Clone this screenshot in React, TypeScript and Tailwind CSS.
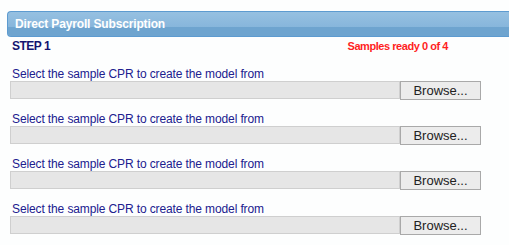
import React from "react";

function Row() {
  return (
    <div className="flex flex-col">
      <div className="h-[14px] pl-[12px] text-[12px] leading-[14px] tracking-[-0.12px] text-[#20208f]">
        Select the sample CPR to create the model from
      </div>
      <div className="flex items-start pl-[10px]">
        <div className="h-[18px] w-[390px] border border-[#cfcfcf] bg-[#e6e6e6]" />
        <button className="h-[19px] w-[81px] border border-[#a9a9a9] bg-[#ececec] font-['Liberation_Sans',Arial,sans-serif] text-[13px] leading-[17px] text-[#222]">
          Browse...
        </button>
      </div>
    </div>
  );
}

export default function App() {
  return (
    <div className="h-[245px] w-[509px] overflow-hidden bg-[#fdfefe] font-['Liberation_Sans',Arial,sans-serif]">
      <div className="pl-[7px] pt-[11px]">
        <div className="relative h-[26px] overflow-hidden rounded-l-[4px] border border-r-0 border-[#5d9bd0] bg-gradient-to-b from-[#96c0e1] to-[#7eb0d8]">
          <div className="absolute bottom-0 left-0 right-0 h-[9px] bg-[#6ea4cf]" />
          <div className="relative pl-[7px] text-[12px] font-bold leading-[24px] tracking-[-0.15px] text-white">Direct Payroll Subscription</div>
        </div>
      </div>
      <div className="flex h-[18px] items-center pl-[12px] pr-[61px]">
        <span className="text-[12px] font-bold tracking-[-0.5px] text-[#141470]">STEP 1</span>
        <span className="ml-auto text-[11px] font-bold tracking-[-0.45px] text-[#ff1f1f]">Samples ready 0 of 4</span>
      </div>
      <div className="mt-[12px] flex flex-col gap-[12px]">
        <Row />
        <Row />
        <Row />
        <Row />
      </div>
    </div>
  );
}
